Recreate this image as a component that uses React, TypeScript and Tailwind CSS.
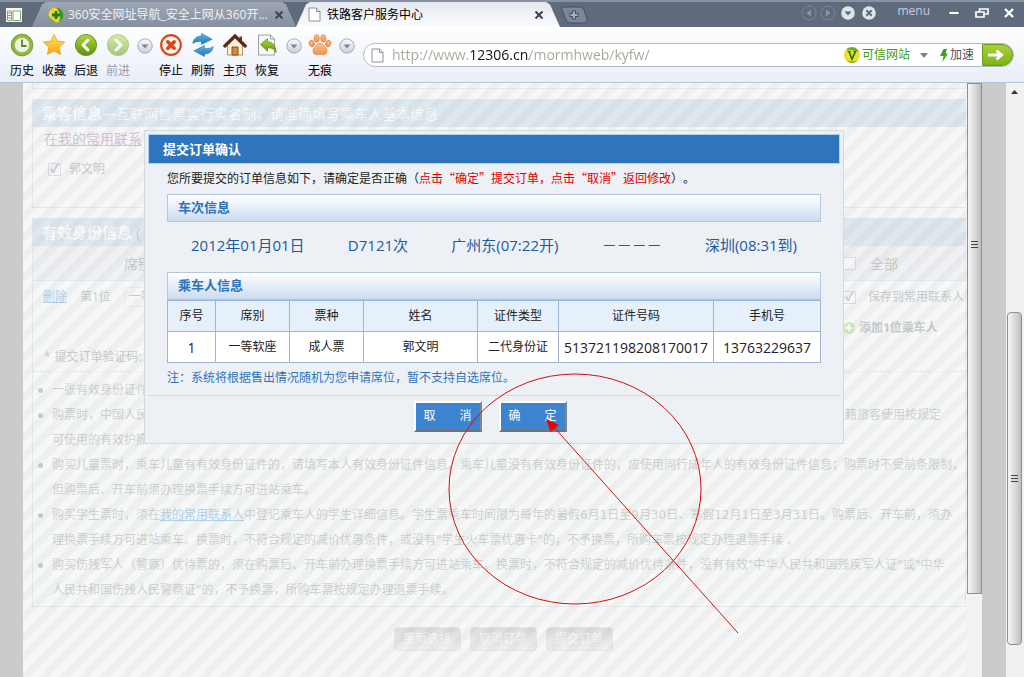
import type { ReactNode } from 'react';

const columns = [
  { label: '序号', value: '1', width: 'w-[48px]' },
  { label: '席别', value: '一等软座', width: 'w-[74px]' },
  { label: '票种', value: '成人票', width: 'w-[74px]' },
  { label: '姓名', value: '郭文明', width: 'w-[114px]' },
  { label: '证件类型', value: '二代身份证', width: 'w-[81px]' },
  { label: '证件号码', value: '513721198208170017', width: 'w-[155px]' },
  { label: '手机号', value: '13763229637', width: 'w-[107px]' },
];

const trip = ['2012年01月01日', 'D7121次', '广州东(07:22开)', '－－－－', '深圳(08:31到)'];

function PageIcon({ className }: { className: string }) {
  return (
    <svg viewBox="0 0 13 15" className={className} fill="none">
      <path d="M1 1h7.5L12 4.5V14H1z" fill="#fff" stroke="#8b929c" />
      <path d="M8.5 1v3.5H12" fill="#e3e6ea" stroke="#8b929c" />
    </svg>
  );
}

function SphereDefs() {
  return (
    <svg className="absolute h-0 w-0" aria-hidden="true">
      <defs>
        <linearGradient id="green" x1="0" y1="0" x2="0" y2="1">
          <stop offset="0" stopColor="#b4d64a" />
          <stop offset="0.5" stopColor="#86b81c" />
          <stop offset="1" stopColor="#5d9310" />
        </linearGradient>
        <linearGradient id="gold" x1="0" y1="0" x2="0" y2="1">
          <stop offset="0" stopColor="#ffe45c" />
          <stop offset="1" stopColor="#f5a512" />
        </linearGradient>
        <linearGradient id="blue" x1="0" y1="0" x2="0" y2="1">
          <stop offset="0" stopColor="#5cb8e6" />
          <stop offset="1" stopColor="#1877b8" />
        </linearGradient>
        <linearGradient id="orange" x1="0" y1="0" x2="0" y2="1">
          <stop offset="0" stopColor="#fbc48a" />
          <stop offset="1" stopColor="#f0914a" />
        </linearGradient>
        <linearGradient id="silver" x1="0" y1="0" x2="0" y2="1">
          <stop offset="0" stopColor="#fbfbfd" />
          <stop offset="1" stopColor="#c9ced8" />
        </linearGradient>
      </defs>
    </svg>
  );
}

function HistoryIcon() {
  return (
    <svg viewBox="0 0 24 24" className="h-6 w-6" fill="none">
      <circle cx="12" cy="12" r="9.3" fill="#eff4dc" stroke="#8fb93a" strokeWidth="3" />
      <circle cx="12" cy="12" r="10.9" stroke="#5f8a10" strokeWidth="0.7" />
      <circle cx="12" cy="12" r="7.6" stroke="#7a9c34" strokeWidth="0.6" />
      <path d="M12 6.5V13h4.5" stroke="#66793f" strokeWidth="1.8" />
    </svg>
  );
}

function StarIcon() {
  return (
    <svg viewBox="0 0 24 24" className="h-6 w-6">
      <path
        d="M12 1.2l3.2 6.9 7.5.9-5.5 5.2 1.4 7.4L12 18l-6.6 3.6 1.4-7.4L1.3 9l7.5-.9z"
        fill="url(#gold)"
        stroke="#e2a325"
        strokeWidth="0.8"
        strokeLinejoin="round"
      />
    </svg>
  );
}

function ArrowIcon({ forward = false }: { forward?: boolean }) {
  return (
    <svg viewBox="0 0 24 24" className={forward ? 'h-6 w-6 opacity-50' : 'h-6 w-6'} fill="none">
      <circle cx="12" cy="12" r="10.6" fill="url(#green)" stroke="#588511" strokeWidth="0.8" />
      <path
        d={forward ? 'M10 7l5 5-5 5' : 'M14 7l-5 5 5 5'}
        stroke="#fff"
        strokeWidth="3"
        strokeLinecap="round"
        strokeLinejoin="round"
      />
    </svg>
  );
}

function StopIcon() {
  return (
    <svg viewBox="0 0 24 24" className="h-6 w-6" fill="none">
      <circle cx="12" cy="12" r="9.8" fill="#fff4ec" stroke="#d9481c" strokeWidth="2.2" />
      <path d="M8.8 8.8l6.400 6.400M15.200 8.800l-6.400 6.400" stroke="#d9481c" strokeWidth="3.6" strokeLinecap="round" />
    </svg>
  );
}

function RefreshIcon() {
  return (
    <svg viewBox="0 0 24 24" className="h-6 w-6" fill="url(#blue)" stroke="#1f6fa8" strokeWidth="0.5">
      <path d="M1.8 10.500C2.300 5.500 6 3 10.500 3V.4l10.700 5.800-10.700 5.300V8.600C7 8 4 8.800 1.800 10.500z" />
      <path d="M22.200 13.500c-.5 5-4.200 7.500-8.700 7.500v2.600L2.800 17.800l10.700-5.300v2.900c3.500.6 6.500-.2 8.700-1.900z" />
    </svg>
  );
}

function HomeIcon() {
  return (
    <svg viewBox="0 0 24 24" className="h-6 w-6" fill="none">
      <path d="M16.500 3.500h2.500v5h-2.500z" fill="#7a3b1d" />
      <path d="M4.500 11.500L12 4.500l7.500 7V22h-15z" fill="#fdf1d8" stroke="#a5713f" strokeWidth="0.8" />
      <path d="M9 14h6v8H9z" fill="#d5893a" stroke="#8a4a1a" />
      <path d="M1.800 13L12 3l10.200 10" stroke="#5b2b14" strokeWidth="3.200" strokeLinecap="round" />
    </svg>
  );
}

function RestoreIcon() {
  return (
    <svg viewBox="0 0 24 24" className="h-6 w-6" fill="none">
      <path d="M3.500 2h12l4 4v16h-16z" fill="#f7f8fa" stroke="#9aa1ab" />
      <path d="M15.500 2v4h4" stroke="#9aa1ab" />
      <path
        d="M5.500 11.500l7-6v3.400c5 0 8.300 3.200 8.500 10.600-2-3.800-4.500-4.800-8.500-4.700V18z"
        fill="url(#green)"
        stroke="#4f8a10"
        strokeWidth="0.7"
      />
    </svg>
  );
}

function PawIcon() {
  return (
    <svg viewBox="0 0 24 24" className="h-6 w-6" fill="url(#orange)" stroke="#d9722a" strokeWidth="0.7">
      <ellipse cx="3.700" cy="10.500" rx="2.500" ry="3.300" transform="rotate(-20 3.700 10.500)" />
      <ellipse cx="8.700" cy="5.400" rx="2.600" ry="3.700" />
      <ellipse cx="15.300" cy="5.400" rx="2.600" ry="3.700" />
      <ellipse cx="20.300" cy="10.500" rx="2.500" ry="3.300" transform="rotate(20 20.300 10.500)" />
      <path d="M12 10.500c3 0 3.800 2.500 5.600 4.300 2.600 2.700 1.200 7-2.300 7-1.500 0-2-.7-3.300-.7s-1.800.7-3.300.7c-3.500 0-4.900-4.300-2.300-7 1.800-1.800 2.600-4.300 5.600-4.300z" />
    </svg>
  );
}

function ToolButton({ label, disabled, children }: { label: string; disabled?: boolean; children: ReactNode }) {
  return (
    <button disabled={disabled} className="flex w-8 flex-col items-center gap-1 text-black disabled:text-gray-400">
      {children}
      <span className="leading-5 whitespace-nowrap">{label}</span>
    </button>
  );
}

function DropButton({ label }: { label: string }) {
  return (
    <button aria-label={label} className="flex w-[21px] items-center justify-center self-start pt-[5px]">
      <svg viewBox="0 0 16 16" className="h-4 w-4">
        <circle cx="8" cy="8" r="7.200" fill="url(#silver)" stroke="#a3a9b5" />
        <path d="M4.500 6.500h7L8 10.500z" fill="#7f8794" />
      </svg>
    </button>
  );
}

function TabBar() {
  return (
    <div className="flex h-[27px] items-end border-t-2 border-[#8492a3] bg-[#5f6b7c]">
      <button aria-label="侧边栏" className="flex w-8 items-center justify-center self-center pr-1">
        <svg viewBox="0 0 16 14" className="h-[14px] w-4">
          <path d="M0 0h16v14H0z" fill="#f7f9ec" />
          <path d="M1.500 3h4v9.500h-4zM7 3h7.500v9.500H7z" fill="#fff" stroke="#8aa16c" />
          <path d="M2.500 5h2M2.500 7.500h2M2.500 10h2" stroke="#55703a" />
        </svg>
      </button>
      <div className="flex h-[25px] w-[264px] items-center bg-[linear-gradient(#a0a7b4,#868f9e)] pr-3 pl-4 text-[#eef1f5] [clip-path:polygon(0_100%,10px_10%,14px_0,250px_0,254px_10%,100%_100%)]">
        <svg viewBox="0 0 16 16" className="mr-1 h-4 w-4 shrink-0">
          <circle cx="8" cy="8" r="7.500" fill="#f6d51f" />
          <path d="M8 .5a7.500 7.500 0 0 1 7.500 7.500c0 3-2 6-5 7 3-4 2-10-2.500-14.500z" fill="#2e9a2b" />
          <path d="M.6 9c1 4 4.500 6.500 8 6.400C5 14 2.500 12 .6 9z" fill="#2e9a2b" />
          <path d="M8 4v8M4 8h8" stroke="#1c7a24" strokeWidth="2.800" />
        </svg>
        <span className="whitespace-nowrap">360安全网址导航_安全上网从360开...</span>
        <button aria-label="关闭标签" className="ml-auto">
          <svg viewBox="0 0 10 10" className="h-[10px] w-[10px]">
            <path d="M1.500 1.500l7 7M8.500 1.500l-7 7" stroke="#3d4551" strokeWidth="2" />
          </svg>
        </button>
      </div>
      <div className="flex h-[25px] w-[264px] items-center bg-[linear-gradient(#e4e8ee,#fbfcfe)] pr-4 pl-3 text-black [clip-path:polygon(0_100%,10px_10%,14px_0,250px_0,254px_10%,100%_100%)]">
        <PageIcon className="mr-[6px] h-[15px] w-[13px] shrink-0" />
        <span className="whitespace-nowrap">铁路客户服务中心</span>
        <button aria-label="关闭标签" className="ml-auto">
          <svg viewBox="0 0 10 10" className="h-[10px] w-[10px]">
            <path d="M1.500 1.500l7 7M8.500 1.500l-7 7" stroke="#3d4551" strokeWidth="2" />
          </svg>
        </button>
      </div>
      <button aria-label="新标签" className="self-center">
        <svg viewBox="0 0 28 18" className="h-[18px] w-7" fill="none">
          <path d="M4 1h16q3 0 4 3l3 9q1 3-2 4H11q-4 0-5-3L2 4q-1-3 2-3z" fill="#7c8696" stroke="#465061" />
          <path d="M14 4.500v9M9.500 9h9" stroke="#465061" strokeWidth="4" />
          <path d="M14 5.500v7M10.500 9h7" stroke="#a9b1bd" strokeWidth="2" />
        </svg>
      </button>
      <div className="ml-auto flex items-center self-center pr-2 pb-1 text-[#c7ced8]">
        <button aria-label="上一个标签">
          <svg viewBox="0 0 16 16" className="mr-[3px] h-4 w-4" fill="none">
            <circle cx="8" cy="8" r="7" stroke="#7b8797" />
            <path d="M10 4.500v7L5.500 8z" fill="#8d98a7" />
          </svg>
        </button>
        <button aria-label="下一个标签">
          <svg viewBox="0 0 16 16" className="mr-1 h-4 w-4" fill="none">
            <circle cx="8" cy="8" r="7" stroke="#7b8797" />
            <path d="M6 4.500v7L10.500 8z" fill="#8d98a7" />
          </svg>
        </button>
        <button aria-label="标签列表">
          <svg viewBox="0 0 16 16" className="mr-[5px] h-4 w-4">
            <circle cx="8" cy="8" r="6.800" fill="#dfe4ea" />
            <path d="M4.500 6.500h7L8 10.500z" fill="#5f6b7c" />
          </svg>
        </button>
        <button aria-label="关闭全部">
          <svg viewBox="0 0 16 16" className="mr-5 h-4 w-4">
            <circle cx="8" cy="8" r="6.800" fill="#dfe4ea" />
            <path d="M5.300 5.300l5.400 5.400M10.700 5.300l-5.400 5.400" stroke="#5f6b7c" strokeWidth="2" />
          </svg>
        </button>
        <button className="mr-4 pb-1 leading-4">menu</button>
        <button aria-label="最小化">
          <svg viewBox="0 0 16 16" className="mr-3 h-4 w-4">
            <path d="M3 6.500h10v3H3z" fill="#fff" stroke="#3c4656" strokeWidth="0.600" />
          </svg>
        </button>
        <button aria-label="还原">
          <svg viewBox="0 0 16 16" className="mr-3 h-4 w-4" fill="none" stroke="#fff" strokeWidth="1.700">
            <path d="M2 7h8v5H2zM5.500 7V4H14v5h-4" />
          </svg>
        </button>
        <button aria-label="关闭">
          <svg viewBox="0 0 14 14" className="h-[14px] w-[14px]" stroke="#fff" strokeWidth="2.400">
            <path d="M3 3l8 8M11 3l-8 8" />
          </svg>
        </button>
      </div>
    </div>
  );
}

function AddressBar() {
  return (
    <form className="mt-[10px] mr-[10px] ml-[6px] flex h-6 flex-1 items-center self-start rounded-full border border-[#b3b9c4] bg-white pl-[7px]">
      <PageIcon className="mr-2 h-[15px] w-[13px] shrink-0" />
      <input
        aria-label="地址"
        defaultValue="http://www.12306.cn/mormhweb/kyfw/"
        className="min-w-0 flex-1 bg-[linear-gradient(to_right,#a9a698_77px,#111_77px,#111_137px,#a9a698_137px)] bg-clip-text text-[14px] leading-5 text-transparent outline-none"
      />
      <button type="button" className="flex items-center text-[#3f9a0f]">
        <svg viewBox="0 0 18 18" className="mr-px h-[18px] w-[18px]" fill="none">
          <circle cx="9" cy="9" r="8" fill="#f4dc2c" />
          <path d="M3 3.500a8 8 0 0 1 13 2.500c-4-2-9-2-13-2.500zM15 14.500a8 8 0 0 1-12-.5c4 2 8 2 12 .5z" fill="#5cb02b" />
          <path d="M4.500 5.500h3M10.500 5.500h3M6 5.500L9 13l3.500-7.500" stroke="#1d7a1d" strokeWidth="1.700" />
        </svg>
        <span className="whitespace-nowrap">可信网站</span>
        <svg viewBox="0 0 8 5" className="mr-2 ml-[10px] h-[5px] w-2">
          <path d="M0 0h8L4 5z" fill="#7d8288" />
        </svg>
      </button>
      <button type="button" className="flex items-center gap-[2px] pl-1 text-[#4a525c]">
        <svg viewBox="0 0 8 13" className="h-[13px] w-2">
          <path d="M3.500 0H7L5.500 4.500H8L2.500 13l1-6H0z" fill="#35a51c" />
        </svg>
        <span className="whitespace-nowrap">加速</span>
      </button>
      <button
        type="button"
        aria-label="转到"
        className="ml-2 flex h-[22px] w-[31px] items-center justify-center rounded-r-full border border-[#6a9a1c] bg-[linear-gradient(#a9d03c,#7db416)]"
      >
        <svg viewBox="0 0 16 12" className="mr-1 h-3 w-4" fill="none" stroke="#fff" strokeWidth="3">
          <path d="M0 6h12M8.500 1.500L13.500 6l-5 4.500" />
        </svg>
      </button>
    </form>
  );
}

function Toolbar() {
  return (
    <div className="flex h-14 items-start border-b border-[#b9c3d3] bg-[linear-gradient(#ffffff,#f4f6fc_50%,#e9edf8)] pt-[6px] pl-[6px]">
      <ToolButton label="历史"><HistoryIcon /></ToolButton>
      <ToolButton label="收藏"><StarIcon /></ToolButton>
      <ToolButton label="后退"><ArrowIcon /></ToolButton>
      <ToolButton label="前进" disabled><ArrowIcon forward /></ToolButton>
      <DropButton label="浏览记录" />
      <ToolButton label="停止"><StopIcon /></ToolButton>
      <ToolButton label="刷新"><RefreshIcon /></ToolButton>
      <ToolButton label="主页"><HomeIcon /></ToolButton>
      <ToolButton label="恢复"><RestoreIcon /></ToolButton>
      <DropButton label="已关闭的网页" />
      <ToolButton label="无痕"><PawIcon /></ToolButton>
      <DropButton label="更多" />
      <AddressBar />
    </div>
  );
}

function TickBox({ id, checked }: { id: string; checked?: boolean }) {
  return (
    <input
      id={id}
      type="checkbox"
      defaultChecked={checked}
      className="flex h-[13px] w-[13px] shrink-0 appearance-none items-center justify-center border border-[#dcdfe2] bg-[#f6f7f7] text-[#c3c5da] checked:before:text-[12px] checked:before:leading-none checked:before:font-bold checked:before:content-['✓']"
    />
  );
}

function Rule({ children }: { children: ReactNode }) {
  return (
    <li className="flex">
      <span className="mt-[10px] mr-[9px] h-[5px] w-[5px] shrink-0 rounded-full bg-[#c9cccb]" />
      <div className="flex-1">{children}</div>
    </li>
  );
}

// The order form lying under the mask, washed out while the dialog is open
function OrderForm() {
  return (
    <div className="flex flex-col pr-px pl-[9px] text-[#c9cccb]">
      <div className="mb-[10px] h-[6px] border-x border-b border-[#e6e9ec]" />
      <section className="mb-[10px]">
        <h2 className="flex h-7 items-center bg-[#dfe8ef] pl-[10px] text-[14px] whitespace-nowrap text-[#f8fafb]">
          <span className="text-[15px] font-bold">乘客信息</span>—互联网售票实行实名制，请准确填写乘车人基本信息
        </h2>
        <div className="h-[81px] border-x border-b border-[#e6e9ec] pl-[11px]">
          <p className="text-[14px] leading-6">
            在<a href="#contacts" className="text-[#d6c2d8] underline">我的常用联系</a>
          </p>
          <div className="flex items-center gap-2 pt-2 pl-1 leading-5">
            <TickBox id="passenger" checked />
            <label htmlFor="passenger">郭文明</label>
          </div>
        </div>
      </section>
      <section>
        <h2 className="flex h-7 items-center bg-[#dfe8ef] pl-[10px] text-[15px] font-bold text-[#f8fafb]">
          有效身份信息<span className="pl-1 font-normal text-[#b7cfe2]">(</span>
        </h2>
        <div className="border-x border-b border-[#e6e9ec] bg-[#f6f8f7]">
          <div className="flex h-[35px] items-center border-b border-[#e6e9ee] bg-[#eff1f4] pl-[91px] text-[14px]">
            席别
            <div className="ml-auto flex w-[122px] items-center gap-[14px]">
              <TickBox id="all" />
              <label htmlFor="all">全部</label>
            </div>
          </div>
          <div className="flex h-8 items-center pl-[10px] whitespace-nowrap">
            <a href="#delete" className="w-[37px] text-[#b4d0e6] underline">删除</a>
            <span className="w-11">第1位</span>
            <select aria-label="席别" className="h-5 w-[70px] appearance-none border border-[#e9ebec] pl-1">
              <option>一等软座</option>
            </select>
            <div className="ml-auto flex w-[122px] items-center gap-3">
              <TickBox id="save" checked />
              <label htmlFor="save">保存到常用联系人</label>
            </div>
          </div>
          <div className="flex h-[30px] items-center">
            <button className="ml-auto flex w-[122px] items-center gap-1 font-bold">
              <svg viewBox="0 0 12 12" className="h-3 w-3 shrink-0">
                <circle cx="6" cy="6" r="6" fill="#d6e8c0" />
                <path d="M6 2.500v7M2.500 6h7" stroke="#fff" strokeWidth="2" />
              </svg>
              添加1位乘车人
            </button>
          </div>
          <div className="flex h-[29px] items-center gap-1 border-b border-dotted border-[#e1e4e4] pl-[11px]">
            <span className="text-[#f1c4c4]">*</span>
            提交订单验证码:
          </div>
          <ul className="pt-[6px] pb-[3px] pl-[5px] font-['DejaVu_Sans','Noto_Sans_CJK_SC',sans-serif] leading-[25px] whitespace-nowrap text-[#d0d3d2]">
            <Rule>一张有效身份证件</Rule>
            <Rule>
              <div className="flex justify-between pr-6">
                <span>购票时，中国人民</span>
                <span>籍旅客使用按规定</span>
              </div>
              可使用的有效护照
            </Rule>
            <Rule>
              购买儿童票时，乘车儿童有有效身份证件的，请填写本人有效身份证件信息。乘车儿童没有有效身份证件的，应使用同行成年人的有效身份证件信息；购票时不受前条限制，
              <br />
              但购票后、开车前须办理换票手续方可进站乘车。
            </Rule>
            <Rule>
              购买学生票时，须在<a href="#contacts" className="text-[#b3d1ea] underline">我的常用联系人</a>
              中登记乘车人的学生详细信息。学生票乘车时间限为每年的暑假6月1日至9月30日、寒假12月1日至3月31日。购票后、开车前，须办
              <br />
              理换票手续方可进站乘车。换票时，不符合规定的减价优惠条件，或没有"学生火车票优惠卡"的，不予换票，所购车票按规定办理退票手续 。
            </Rule>
            <Rule>
              购买伤残军人（警察）优待票的，须在购票后、开车前办理换票手续方可进站乘车。换票时，不符合规定的减价优待条件，没有有效"中华人民共和国残疾军人证"或"中华
              <br />
              人民共和国伤残人民警察证"的，不予换票，所购车票按规定办理退票手续。
            </Rule>
          </ul>
        </div>
      </section>
      <div className="flex justify-center gap-[9px] pt-5 pl-2 text-[#f8f8f8]">
        {['重新选择', '取消订单', '提交订单'].map((text) => (
          <button
            key={text}
            className="h-6 w-[67px] rounded border border-[#e6e6e6] bg-[linear-gradient(#dcdcdc,#f0f0f0)] whitespace-nowrap"
          >
            {text}
          </button>
        ))}
      </div>
    </div>
  );
}

function SectionTitle({ children }: { children: ReactNode }) {
  return (
    <h3 className="h-7 border border-[#b4c6dc] bg-[linear-gradient(#ffffff,#cbdcf0)] pl-[10px] text-[13px] leading-6 font-bold text-[#2d74b8]">
      {children}
    </h3>
  );
}

function DialogButton({ children }: { children: ReactNode }) {
  return (
    <button className="h-[31px] w-[68px] border-2 border-t-white border-r-[#7d8790] border-b-[#77716c] border-l-white bg-[#3c84d0] pb-[2px] whitespace-nowrap text-white">
      {children}
    </button>
  );
}

function ConfirmDialog() {
  return (
    <div role="dialog" aria-labelledby="dialog-title" className="relative w-[700px] border border-[#d5d9dc] bg-[#edf1f5] p-[3px]">
      <h2
        id="dialog-title"
        className="h-[30px] border border-[#a9d2f5] bg-[#2f75be] pl-[14px] text-[13px] leading-7 font-bold text-white"
      >
        提交订单确认
      </h2>
      <div className="px-[19px]">
        <p className="pt-[3px] pb-[5px] font-['Noto_Sans_CJK_SC',sans-serif] leading-[22px] whitespace-nowrap text-[#222]">
          您所要提交的订单信息如下，请确定是否正确（
          <span className="text-[#e00000]">点击“确定”提交订单，点击“取消”返回修改</span>）。
        </p>
        <SectionTitle>车次信息</SectionTitle>
        <div className="flex h-[50px] items-center justify-between px-6 pb-[3px] text-[15px] whitespace-nowrap text-[#1c5a9c]">
          {trip.map((part) => (
            <span key={part}>{part}</span>
          ))}
        </div>
        <SectionTitle>乘车人信息</SectionTitle>
        <table className="w-full table-fixed border-collapse text-center text-[#222]">
          <thead className="bg-[#e6f0fa]">
            <tr>
              {columns.map((col) => (
                <th key={col.label} className={`h-[31px] border border-[#9fb4d0] font-normal ${col.width}`}>
                  {col.label}
                </th>
              ))}
            </tr>
          </thead>
          <tbody className="bg-white">
            <tr>
              {columns.map((col) => (
                <td
                  key={col.label}
                  className={`h-[31px] border border-[#9fb4d0] whitespace-nowrap ${/^\d+$/.test(col.value) ? 'text-[14px]' : ''}`}
                >
                  {col.value}
                </td>
              ))}
            </tr>
          </tbody>
        </table>
        <p className="pt-[3px] pb-[5px] leading-6 text-[#2d74b8]">
          注：系统将根据售出情况随机为您申请席位，暂不支持自选席位。
        </p>
      </div>
      <div className="flex h-[45px] justify-center gap-[17px] border-t border-[#d5dade] pt-[5px] pr-2">
        <DialogButton>取　　消</DialogButton>
        <DialogButton>确　　定</DialogButton>
      </div>

      {/* Hand-drawn pointer to the confirm button */}
      <svg
        viewBox="0 0 294 264"
        className="pointer-events-none absolute top-[242px] left-[303px] h-[264px] w-[294px]"
        fill="none"
        stroke="#d40f0f"
      >
        <ellipse cx="127" cy="116" rx="126" ry="115" />
        <path d="M290 260L104 52" />
        <path d="M98 46l4.500 13 8.500-7z" fill="#f00000" stroke="none" />
      </svg>
    </div>
  );
}

function Grip() {
  return (
    <span className="flex flex-col gap-[2px]">
      <span className="h-px w-[7px] bg-[#444]" />
      <span className="h-px w-[7px] bg-[#444]" />
      <span className="h-px w-[7px] bg-[#444]" />
    </span>
  );
}

export default function App() {
  return (
    <div className="flex h-screen flex-col overflow-hidden font-['Open_Sans','Noto_Sans_CJK_SC',sans-serif] text-[12px] [text-spacing-trim:space-all]">
      <SphereDefs />
      <TabBar />
      <Toolbar />
      <main className="flex min-h-0 flex-1 bg-[#cbcbcb] pl-[23px]">
        <div className="relative min-w-0 flex-1 overflow-hidden bg-[#f7f7f7]">
          <OrderForm />
          <div className="absolute inset-0 bg-[linear-gradient(135deg,#0000_25%,#00000008_25%_50%,#0000_50%_75%,#00000008_75%)] bg-[size:20px_20px]" />
          <div className="absolute inset-x-0 top-[47px] flex justify-center pr-[2px]">
            <ConfirmDialog />
          </div>
        </div>
        <div className="w-[15px] bg-[#f3f3f3]">
          <div className="flex h-[86%] flex-col items-center border border-[#8f8f8f] bg-[linear-gradient(to_right,#f6f6f6,#dcdcdc_50%,#bdbdc1)] pt-[157px]">
            <Grip />
          </div>
        </div>
        <div className="ml-6 flex w-[18px] flex-col bg-[#f1f1f1] pr-[2px] pl-px">
          <div className="flex grow justify-center pt-[7px]">
            <svg viewBox="0 0 7 4" className="h-1 w-[7px]">
              <path d="M0 4h7L3.500 0z" fill="#333" />
            </svg>
          </div>
          <div className="flex h-[56%] flex-col items-center justify-center rounded-sm border border-[#8f8f8f] bg-[linear-gradient(to_right,#f6f6f6,#dcdcdc_50%,#bdbdc1)]">
            <Grip />
          </div>
          <div className="h-8" />
        </div>
      </main>
    </div>
  );
}
